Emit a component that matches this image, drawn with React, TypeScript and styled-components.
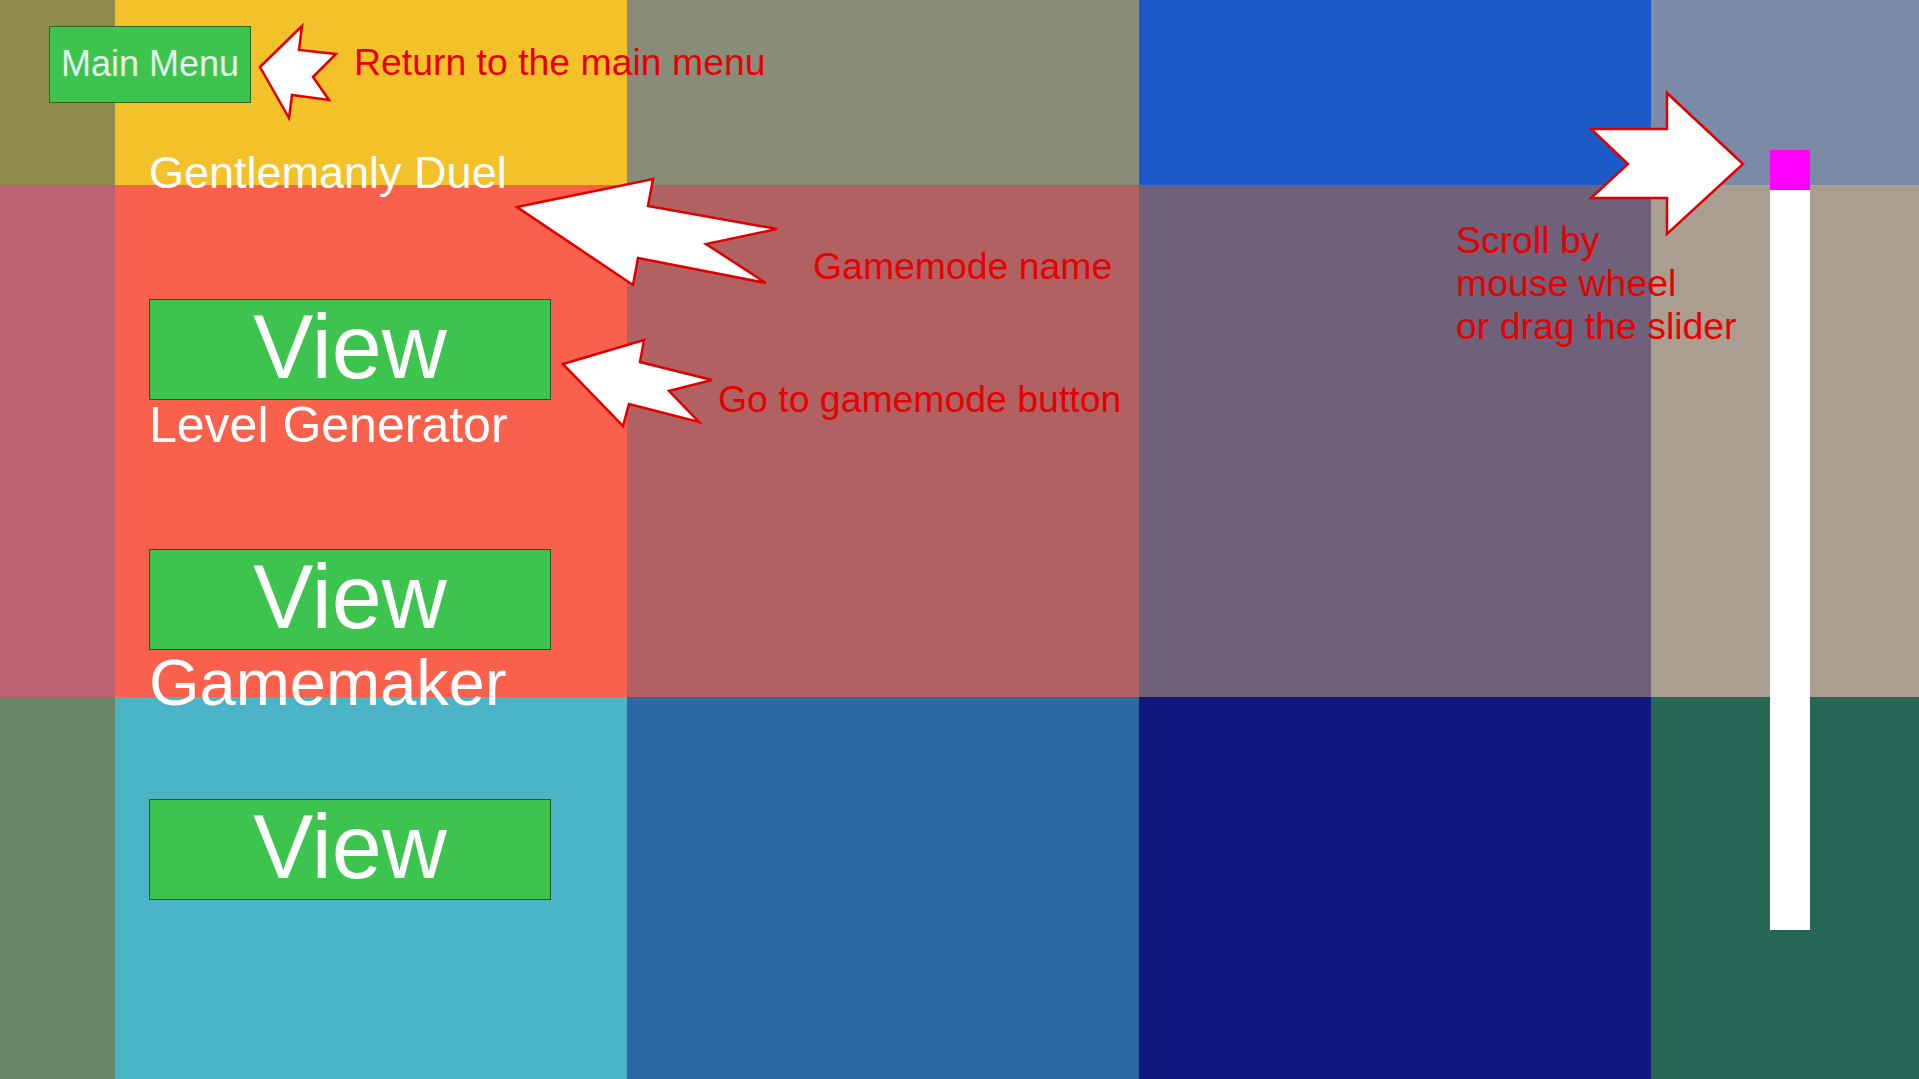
import React from "react";
import styled, { createGlobalStyle } from "styled-components";

const GlobalStyle = createGlobalStyle`
  html, body {
    margin: 0;
    padding: 0;
    overflow: hidden;
    background: #000;
  }
  body {
    font-family: "Liberation Sans", Arial, sans-serif;
  }
  * { box-sizing: border-box; }
`;

const Screen = styled.div`
  position: relative;
  display: grid;
  width: 1919px;
  height: 1079px;
  overflow: hidden;
`;

const Backdrop = styled.div`
  grid-area: 1 / 1;
  display: grid;
  grid-template-columns: 115px 512px 512px 512px 1fr;
  grid-template-rows: 185px 512px 1fr;
`;

const Tile = styled.div<{ $color: string }>`
  background: ${(p) => p.$color};
`;

const Stage = styled.div`
  grid-area: 1 / 1;
  display: flex;
  align-items: flex-start;
`;

const LeftPane = styled.div`
  flex: 1;
  display: flex;
  flex-direction: column;
  align-items: flex-start;
  padding: 26px 0 0 49px;
`;

const MainMenuButton = styled.button`
  width: 202px;
  height: 77px;
  display: flex;
  align-items: center;
  justify-content: center;
  padding: 0 0 2px;
  background: #3dc44e;
  border: 1px solid rgba(30, 30, 0, 0.55);
  color: #e4f5ef;
  font-family: "Liberation Sans", Arial, sans-serif;
  font-size: 36px;
  cursor: pointer;
`;

const ModeList = styled.div`
  display: flex;
  flex-direction: column;
  margin: 47px 0 0 100px;
  width: 402px;
`;

const ModeItem = styled.div`
  display: flex;
  flex-direction: column;
`;

const ModeLabel = styled.div<{ $size: number }>`
  height: 149px;
  color: #ffffff;
  font-size: ${(p) => p.$size}px;
  line-height: 1;
  white-space: nowrap;
`;

const ViewButton = styled.button`
  width: 402px;
  height: 101px;
  display: flex;
  align-items: center;
  justify-content: center;
  padding: 0 0 4px;
  background: #3dc44e;
  border: 1px solid rgba(0, 0, 0, 0.55);
  color: #ffffff;
  font-family: "Liberation Sans", Arial, sans-serif;
  font-size: 90px;
  line-height: normal;
  cursor: pointer;
`;

const SliderColumn = styled.div`
  padding: 150px 109px 0 0;
`;

const SliderTrack = styled.div`
  width: 40px;
  height: 780px;
  background: #ffffff;
  display: flex;
  flex-direction: column;
`;

const SliderHandle = styled.div`
  width: 40px;
  height: 40px;
  background: #ff00ff;
`;

const ArrowLayer = styled.svg`
  position: absolute;
  left: 0;
  top: 0;
  pointer-events: none;
`;

const Note = styled.div<{ $x: number; $y: number }>`
  position: absolute;
  left: ${(p) => p.$x}px;
  top: ${(p) => p.$y}px;
  color: #e60000;
  font-size: 37.4px;
  line-height: 1;
  white-space: nowrap;
`;

const MultiNote = styled(Note)`
  line-height: 43px;
  white-space: pre;
`;

const tiles = [
  ["#8f8b4b", "#f3c12a", "#878d79", "#1c5ac8", "#7b8aa6"],
  ["#bc6474", "#f9614d", "#b26163", "#6f6179", "#aa9e90"],
  ["#698868", "#4bb4c6", "#2d67a4", "#10187f", "#256654"],
];

const modes = [
  { name: "Gentlemanly Duel", size: 45 },
  { name: "Level Generator", size: 50 },
  { name: "Gamemaker", size: 65 },
];

const arrows = [
  "260,67 302,26 299,50 336,54 313,77 329,100 292,95 289,118",
  "517,207 653,179 648,206 777,229 706,244 766,283 638,258 633,285",
  "563,364 644,340 640,362 712,380 669,391 699,422 629,404 623,426",
  "1743,164 1667,93 1667,129 1591,129 1628,164 1591,198 1667,198 1667,234",
];

export default function App() {
  return (
    <>
      <GlobalStyle />
      <Screen>
        <Backdrop>
          {tiles.flat().map((c, i) => (
            <Tile key={i} $color={c} />
          ))}
        </Backdrop>
        <Stage>
          <LeftPane>
            <MainMenuButton>Main Menu</MainMenuButton>
            <ModeList>
              {modes.map((m) => (
                <ModeItem key={m.name}>
                  <ModeLabel $size={m.size}>{m.name}</ModeLabel>
                  <ViewButton>View</ViewButton>
                </ModeItem>
              ))}
            </ModeList>
          </LeftPane>
          <SliderColumn>
            <SliderTrack>
              <SliderHandle />
            </SliderTrack>
          </SliderColumn>
        </Stage>
        <ArrowLayer width="1919" height="1079" viewBox="0 0 1919 1079">
          {arrows.map((pts, i) => (
            <polygon
              key={i}
              points={pts}
              fill="#ffffff"
              stroke="#e00000"
              strokeWidth="2.5"
              strokeLinejoin="miter"
            />
          ))}
        </ArrowLayer>
        <Note $x={354} $y={44}>Return to the main menu</Note>
        <Note $x={813} $y={248}>Gamemode name</Note>
        <Note $x={718} $y={381}>Go to gamemode button</Note>
        <MultiNote $x={1456} $y={219}>{"Scroll by\nmouse wheel\nor drag the slider"}</MultiNote>
      </Screen>
    </>
  );
}
